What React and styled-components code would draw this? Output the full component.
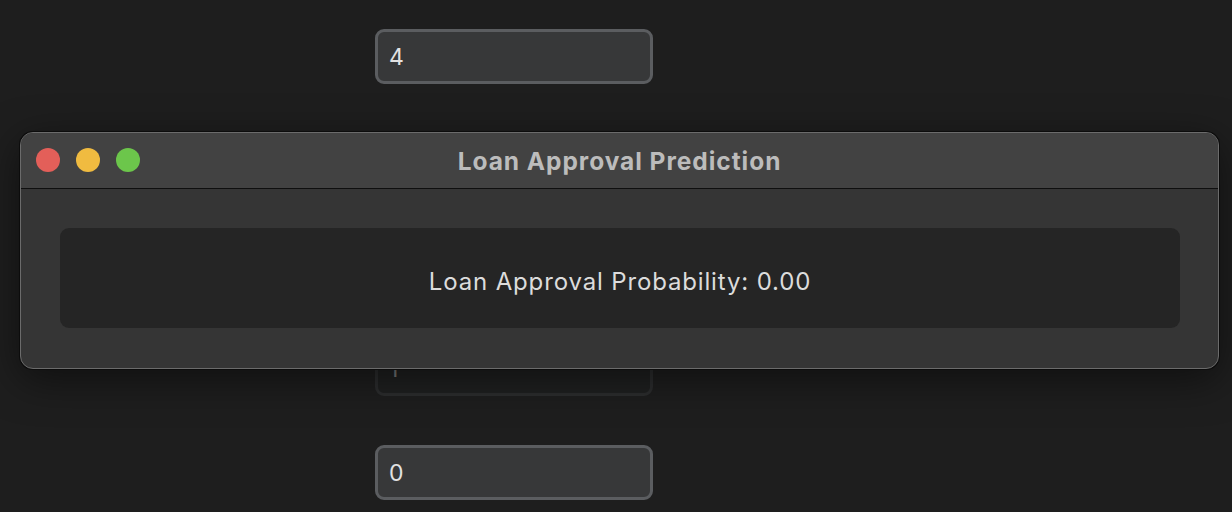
import React from "react";
import styled, { createGlobalStyle } from "styled-components";

const Global = createGlobalStyle`
  html, body { margin: 0; padding: 0; background: #1e1e1e; }
  body { font-family: Inter, "Noto Sans", sans-serif; overflow: hidden; }
  #root { height: 512px; }
`;

const Page = styled.div`
  position: relative;
  width: 1232px;
  height: 512px;
  background: #1e1e1e;
  overflow: hidden;
`;

const Form = styled.div`
  display: flex;
  flex-direction: column;
  gap: 49px;
  padding: 29px 0 0 375px;
`;

const Field = styled.div`
  box-sizing: border-box;
  width: 278px;
  height: 55px;
  border: 3px solid ${(p) => (p.$shaded ? "#2c2d2e" : "#5b5d60")};
  border-radius: 9px;
  background: ${(p) => (p.$shaded ? "#1f2020" : "#373839")};
  color: ${(p) => (p.$shaded ? "#777" : "#e2e2e2")};
  font-size: 23px;
  display: flex;
  align-items: center;
  padding-left: 11px;
`;

const Window = styled.div`
  position: absolute;
  left: 20px;
  top: 132px;
  width: 1199px;
  height: 237px;
  box-sizing: border-box;
  border-radius: 13px;
  background: #353535;
  border: 1px solid #6b6b6b;
  box-shadow: 0 0 0 1px #0c0c0c, 0 10px 40px rgba(0, 0, 0, 0.5);
  overflow: hidden;
  display: flex;
  flex-direction: column;
`;

const TitleBar = styled.div`
  position: relative;
  height: 55px;
  background: #424242;
  border-bottom: 1px solid #0f0f0f;
  display: flex;
  align-items: center;
  justify-content: center;
`;

const Lights = styled.div`
  position: absolute;
  left: 15px;
  top: 15px;
  display: flex;
  gap: 16px;
`;

const Light = styled.span`
  width: 24px;
  height: 24px;
  border-radius: 50%;
  background: ${(p) => p.$color};
`;

const Title = styled.div`
  color: #bcbcbc;
  font-weight: 700;
  font-size: 24.5px;
  letter-spacing: 0.95px;
  padding-top: 1px;
`;

const Body = styled.div`
  flex: 1;
  padding: 39px 38px 0 39px;
`;

const Result = styled.div`
  height: 100px;
  border-radius: 9px;
  background: #252525;
  display: flex;
  align-items: center;
  justify-content: center;
  color: #dcdcdc;
  font-size: 24px;
  letter-spacing: 0.85px;
  padding-top: 6px;
  box-sizing: border-box;
`;

export default function App() {
  return (
    <Page>
      <Global />
      <Form>
        <Field>4</Field>
        <Field>1</Field>
        <Field>1</Field>
        <Field $shaded>1</Field>
        <Field>0</Field>
      </Form>
      <Window>
        <TitleBar>
          <Lights>
            <Light $color="#e35f59" />
            <Light $color="#f0bb40" />
            <Light $color="#6cc64b" />
          </Lights>
          <Title>Loan Approval Prediction</Title>
        </TitleBar>
        <Body>
          <Result>Loan Approval Probability: 0.00</Result>
        </Body>
      </Window>
    </Page>
  );
}
